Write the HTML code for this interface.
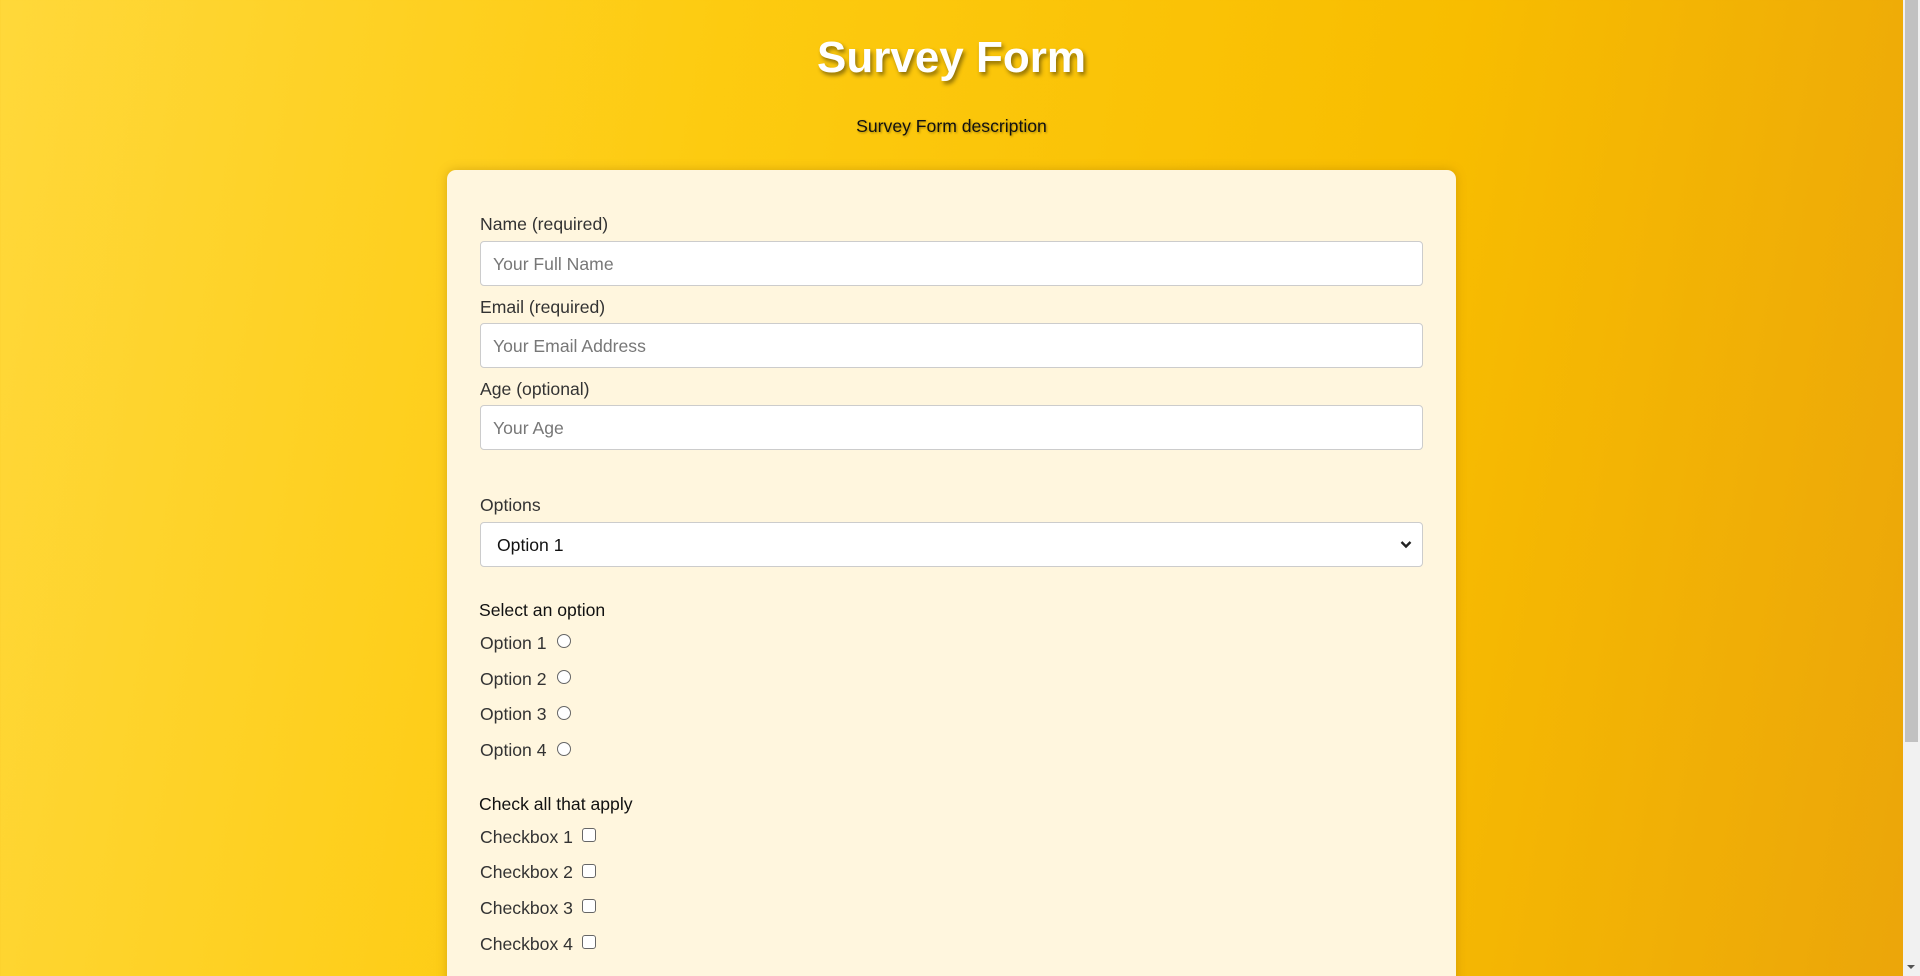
<!DOCTYPE html>
<html><head><meta charset="utf-8"><style>
*{box-sizing:border-box;margin:0;padding:0}
html,body{width:1920px;height:976px;overflow:hidden}
body{font-family:"Liberation Sans",Arial,sans-serif;background:linear-gradient(100deg,#ffd83a 0%,#fdcb10 35%,#f8bd00 70%,#eba50a 100%);position:relative}
.t{position:absolute;white-space:nowrap}
h1{position:absolute;left:0;width:1903px;text-align:center;top:33px;font-size:44px;font-weight:bold;color:#fff;text-shadow:2px 3px 4px rgba(0,0,0,.45)}
.desc{left:0;width:1903px;text-align:center;top:116px;font-size:17.6px;color:#111;text-shadow:1px 1px 2px rgba(0,0,0,.35)}
.card{position:absolute;left:447px;top:170px;width:1009px;height:820px;background:#fff6de;border-radius:9px;box-shadow:0 0 10px rgba(150,100,0,.35)}
.lab{font-size:17.6px;color:#333;left:480px}
.inp{position:absolute;left:480px;width:943px;height:45px;background:#fff;border:1px solid #ccc;border-radius:4px;font-size:17.6px;color:#777;padding:11px 12px;line-height:22px}
.sel{color:#111;padding-left:16px}
.hd{font-size:17.6px;color:#111;left:479px}
.radio{position:absolute;width:14px;height:14px;border:1px solid #666;border-radius:50%;background:#fff;left:557px}
.cb{position:absolute;width:14px;height:14px;border:1px solid #666;border-radius:3px;background:#fff;left:582px}
.sb{position:absolute;left:1903px;top:0;width:17px;height:976px;background:#f1f1f1}
.th{position:absolute;left:1905px;top:0;width:13px;height:742px;background:#c1c1c1}
</style></head><body>
<h1>Survey Form</h1>
<div class="t desc">Survey Form description</div>
<div class="card"></div>
<div class="t lab" style="top:214px">Name (required)</div>
<div class="inp" style="top:241px">Your Full Name</div>
<div class="t lab" style="top:297px">Email (required)</div>
<div class="inp" style="top:323px">Your Email Address</div>
<div class="t lab" style="top:379px">Age (optional)</div>
<div class="inp" style="top:405px">Your Age</div>
<div class="t lab" style="top:495px">Options</div>
<div class="inp sel" style="top:522px">Option 1
<svg style="position:absolute;right:10px;top:17px" width="12" height="9" viewBox="0 0 12 9"><path d="M1.5 2 L6 6.5 L10.5 2" stroke="#222" stroke-width="2.4" fill="none"/></svg></div>
<div class="t hd" style="top:600px">Select an option</div>
<div class="t lab" style="top:633px">Option 1</div><div class="radio" style="top:634px"></div>
<div class="t lab" style="top:669px">Option 2</div><div class="radio" style="top:670px"></div>
<div class="t lab" style="top:704px">Option 3</div><div class="radio" style="top:706px"></div>
<div class="t lab" style="top:740px">Option 4</div><div class="radio" style="top:742px"></div>
<div class="t hd" style="top:794px">Check all that apply</div>
<div class="t lab" style="top:827px">Checkbox 1</div><div class="cb" style="top:828px"></div>
<div class="t lab" style="top:862px">Checkbox 2</div><div class="cb" style="top:864px"></div>
<div class="t lab" style="top:898px">Checkbox 3</div><div class="cb" style="top:899px"></div>
<div class="t lab" style="top:934px">Checkbox 4</div><div class="cb" style="top:935px"></div>
<div class="sb"></div><div class="th"></div>
<svg style="position:absolute;left:1906px;top:964px" width="10" height="6"><path d="M1 1 L9 1 L5 5Z" fill="#555"/></svg>
</body></html>
